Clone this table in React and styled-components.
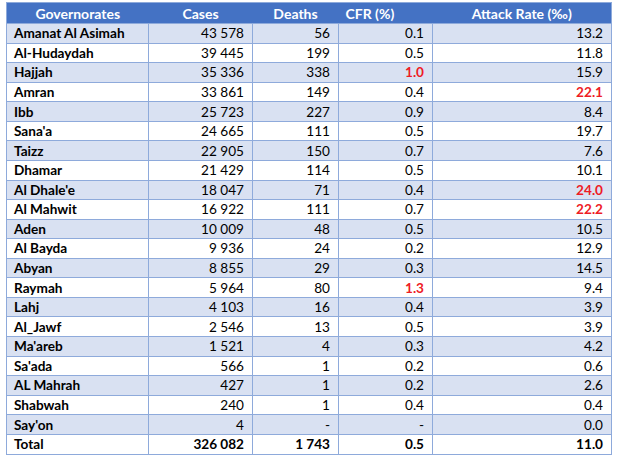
import React from "react";
import styled, { createGlobalStyle } from "styled-components";

const GlobalStyle = createGlobalStyle`
  body {
    margin: 0;
    background: #ffffff;
    font-family: Lato, "Liberation Sans", sans-serif;
  }
`;

const Page = styled.div`
  padding: 2px 0 0 6px;
`;

const Table = styled.table`
  border-collapse: collapse;
  width: 605px;
  table-layout: fixed;
  font-size: 13.6px;
  color: #000000;
  border: 1px solid #8eaadb;
`;

const HeadCell = styled.th`
  background-color: #4472c4;
  color: #ffffff;
  font-weight: 700;
  font-size: 14px;
  height: 20px;
  padding: 0;
  text-align: ${(p) => (p.$left ? "left" : "center")};
  padding-left: ${(p) => (p.$left ? "7px" : "0")};
`;

const Row = styled.tr`
  background-color: ${(p) => (p.$band ? "#d9e1f2" : "#ffffff")};
  height: ${(p) => (p.$total ? "20px" : "19.57px")};
`;

const NameCell = styled.td`
  font-weight: 700;
  padding: 0 0 0 7px;
  border: 1px solid #8eaadb;
  white-space: nowrap;
`;

const NumCell = styled.td`
  text-align: right;
  padding: 0 8px 0 0;
  border: 1px solid #8eaadb;
  font-weight: ${(p) => (p.$bold || p.$red ? 700 : 400)};
  color: ${(p) => (p.$red ? "#ee1c25" : "#000000")};
  white-space: nowrap;
`;

const rows = [
  ["Amanat Al Asimah", "43 578", "56", "0.1", "13.2"],
  ["Al-Hudaydah", "39 445", "199", "0.5", "11.8"],
  ["Hajjah", "35 336", "338", "1.0", "15.9", "cfr"],
  ["Amran", "33 861", "149", "0.4", "22.1", "ar"],
  ["Ibb", "25 723", "227", "0.9", "8.4"],
  ["Sana'a", "24 665", "111", "0.5", "19.7"],
  ["Taizz", "22 905", "150", "0.7", "7.6"],
  ["Dhamar", "21 429", "114", "0.5", "10.1"],
  ["Al Dhale'e", "18 047", "71", "0.4", "24.0", "ar"],
  ["Al Mahwit", "16 922", "111", "0.7", "22.2", "ar"],
  ["Aden", "10 009", "48", "0.5", "10.5"],
  ["Al Bayda", "9 936", "24", "0.2", "12.9"],
  ["Abyan", "8 855", "29", "0.3", "14.5"],
  ["Raymah", "5 964", "80", "1.3", "9.4", "cfr"],
  ["Lahj", "4 103", "16", "0.4", "3.9"],
  ["Al_Jawf", "2 546", "13", "0.5", "3.9"],
  ["Ma'areb", "1 521", "4", "0.3", "4.2"],
  ["Sa'ada", "566", "1", "0.2", "0.6"],
  ["AL Mahrah", "427", "1", "0.2", "2.6"],
  ["Shabwah", "240", "1", "0.4", "0.4"],
  ["Say'on", "4", "-", "-", "0.0"],
];

const App = () => {
  return (
    <Page>
      <GlobalStyle />
      <Table>
        <colgroup>
          <col style={{ width: "142px" }} />
          <col style={{ width: "104px" }} />
          <col style={{ width: "86px" }} />
          <col style={{ width: "94px" }} />
          <col style={{ width: "179px" }} />
        </colgroup>
        <thead>
          <tr>
            <HeadCell>Governorates</HeadCell>
            <HeadCell>Cases</HeadCell>
            <HeadCell>Deaths</HeadCell>
            <HeadCell $left>CFR (%)</HeadCell>
            <HeadCell>Attack Rate (‰)</HeadCell>
          </tr>
        </thead>
        <tbody>
          {rows.map((r, i) => (
            <Row key={r[0]} $band={i % 2 === 0}>
              <NameCell>{r[0]}</NameCell>
              <NumCell>{r[1]}</NumCell>
              <NumCell>{r[2]}</NumCell>
              <NumCell $red={r[5] === "cfr"}>{r[3]}</NumCell>
              <NumCell $red={r[5] === "ar"}>{r[4]}</NumCell>
            </Row>
          ))}
          <Row $total>
            <NameCell>Total</NameCell>
            <NumCell $bold>326 082</NumCell>
            <NumCell $bold>1 743</NumCell>
            <NumCell $bold>0.5</NumCell>
            <NumCell $bold>11.0</NumCell>
          </Row>
        </tbody>
      </Table>
    </Page>
  );
};

export default App;
